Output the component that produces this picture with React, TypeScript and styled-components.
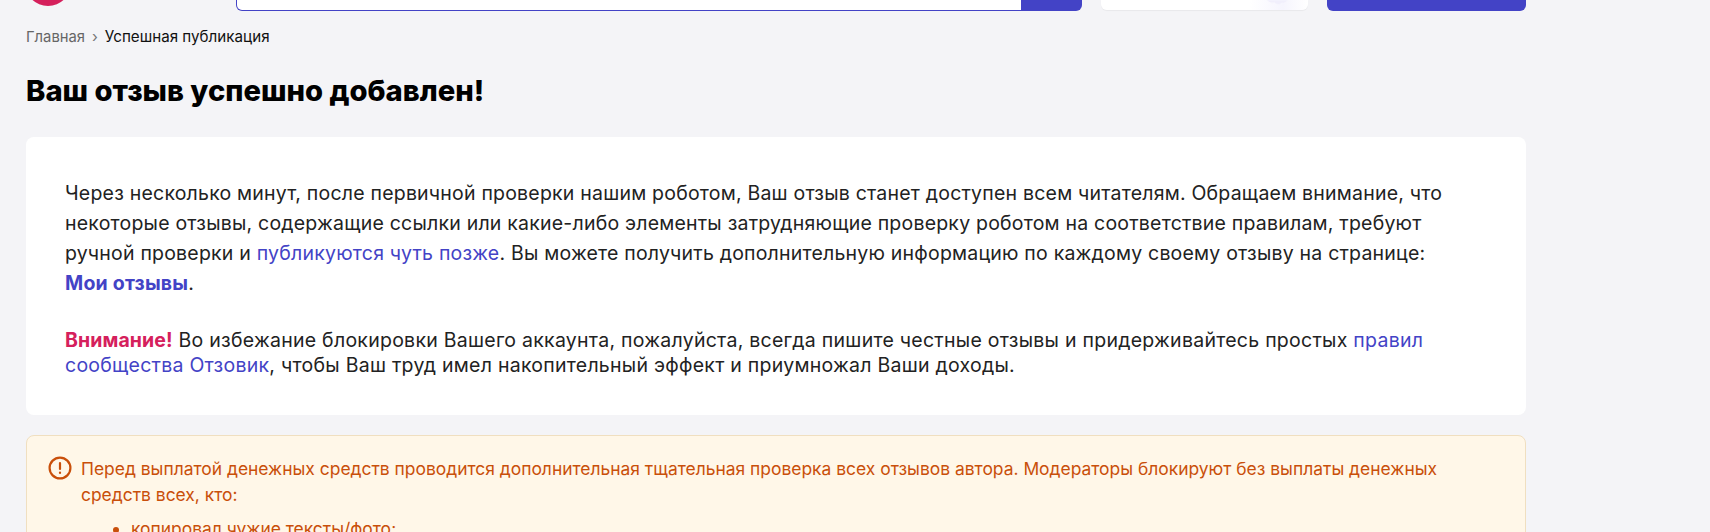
import { createGlobalStyle } from "styled-components";
import styled from "styled-components";

const GlobalStyle = createGlobalStyle`
  html, body {
    margin: 0;
    padding: 0;
    height: 532px;
    overflow: hidden;
    background: #f4f4f7;
  }
  body {
    font-family: Inter, "Noto Sans", sans-serif;
    color: #222;
  }
`;

export default function App() {
  return (
    <>
      <GlobalStyle />
      <Page>
        <Header>
          <LogoArea>
            <LogoMark />
          </LogoArea>
          <Search>
            <SearchField />
            <SearchButton />
          </Search>
          <PromoCard>
            <PromoCloud viewBox="0 0 36 10" fill="none">
              <path d="M0 0c3 4 8 6 12 4 3 4 9 5 12 1 4 1 8-1 10-5z" fill="#f1effc" stroke="#f8f7fe" />
            </PromoCloud>
          </PromoCard>
          <AddButton />
        </Header>

        <Breadcrumbs>
          <Crumb>Главная</Crumb>
          <Separator>›</Separator>
          <CurrentCrumb>Успешная публикация</CurrentCrumb>
        </Breadcrumbs>

        <Title>Ваш отзыв успешно добавлен!</Title>

        <Card>
          <Lead>
            Через несколько минут, после первичной проверки нашим роботом, Ваш отзыв станет доступен всем читателям.
            Обращаем внимание, что некоторые отзывы, содержащие ссылки или какие-либо элементы затрудняющие проверку
            роботом на соответствие правилам, требуют ручной проверки и <TextLink>публикуются чуть позже</TextLink>. Вы
            можете получить дополнительную информацию по каждому своему отзыву на странице:{" "}
            <BoldLink>Мои отзывы</BoldLink>.
          </Lead>
          <Warning>
            <WarningLabel>Внимание!</WarningLabel> Во избежание блокировки Вашего аккаунта, пожалуйста, всегда пишите
            честные отзывы и придерживайтесь простых <TextLink>правил сообщества Отзовик</TextLink>, чтобы Ваш труд имел
            накопительный эффект и приумножал Ваши доходы.
          </Warning>
        </Card>

        <Notice>
          <NoticeIcon viewBox="0 0 24 24" fill="none" stroke="currentColor" strokeWidth="2.2" strokeLinecap="round">
            <circle cx="12" cy="12" r="10.4" />
            <path d="M12 7v6" />
            <path d="M12 16.5v.5" />
          </NoticeIcon>
          <NoticeBody>
            <NoticeText>
              Перед выплатой денежных средств проводится дополнительная тщательная проверка всех отзывов автора.
              Модераторы блокируют без выплаты денежных средств всех, кто:
            </NoticeText>
            <NoticeList>
              <li>копировал чужие тексты/фото;</li>
              <li>писал отзывы на заказ;</li>
            </NoticeList>
          </NoticeBody>
        </Notice>
      </Page>
    </>
  );
}

const Page = styled.div`
  width: 1500px;
  margin-left: 26px;
`;

const Header = styled.header`
  display: flex;
  height: 11px;
`;

const LogoArea = styled.div`
  width: 210px;
  height: 11px;
`;

const LogoMark = styled.div`
  width: 46px;
  height: 46px;
  margin: -40.5px 0 0 -1px;
  border-radius: 50%;
  background: #d5205c;
`;

const Search = styled.div`
  display: flex;
  width: 846px;
`;

const SearchField = styled.div`
  flex: 1;
  background: #fff;
  border: 1px solid #4343c6;
  border-top: none;
  border-radius: 0 0 0 6px;
`;

const SearchButton = styled.div`
  width: 60px;
  background: #4343c6;
  border-radius: 0 0 6px 0;
`;

const PromoCard = styled.div`
  position: relative;
  width: 207px;
  height: 10px;
  margin-left: 19px;
  background: linear-gradient(90deg, #fff 72%, #f6f5fe 88%, #fff 100%);
  border-radius: 0 0 6px 6px;
  box-shadow: 0 1px 1px rgba(0, 0, 0, 0.05);
`;

const PromoCloud = styled.svg`
  position: absolute;
  top: 0;
  right: 12px;
  width: 36px;
  height: 6px;
`;

const AddButton = styled.div`
  width: 199px;
  margin-left: 19px;
  background: #4343c6;
  border-radius: 0 0 6px 6px;
`;

const Breadcrumbs = styled.nav`
  display: flex;
  align-items: center;
  gap: 7px;
  margin-top: 16px;
  height: 20px;
  font-size: 15.2px;
  line-height: 20px;
`;

const Crumb = styled.span`
  color: #666;
  font-size: 14.8px;
`;

const Separator = styled.span`
  color: #777;
`;

const CurrentCrumb = styled.span`
  color: #111;
`;

const Title = styled.h1`
  margin: 26px 0 0;
  height: 36px;
  font-size: 29.2px;
  line-height: 36px;
  font-weight: 800;
  color: #000;
`;

const Card = styled.section`
  box-sizing: border-box;
  height: 278px;
  margin-top: 28px;
  padding: 41px 40px 0 39px;
  background: #fff;
  border-radius: 8px;
  font-size: 19.5px;
  letter-spacing: 0.21px;
`;

const Lead = styled.p`
  margin: 0;
  line-height: 30px;
`;

const Warning = styled.p`
  margin: 30px 0 0;
  line-height: 25px;
  letter-spacing: 0.26px;
`;

const WarningLabel = styled.b`
  color: #d5205c;
  font-weight: 700;
  letter-spacing: 0.1px;
`;

const TextLink = styled.a`
  color: #4343c6;
`;

const BoldLink = styled.a`
  color: #4343c6;
  font-weight: 700;
  white-space: nowrap;
`;

const Notice = styled.section`
  display: flex;
  gap: 9px;
  margin-top: 20px;
  padding: 20px 50px 20px 21px;
  background: #fff7e8;
  border: 1px solid #f0dfc0;
  border-radius: 8px;
  color: #c94f0a;
`;

const NoticeIcon = styled.svg`
  flex: none;
  width: 24px;
  height: 24px;
`;

const NoticeBody = styled.div`
  font-size: 17.43px;
  line-height: 26px;
`;

const NoticeText = styled.p`
  margin: 0;
`;

const NoticeList = styled.ul`
  margin: 8px 0 0;
  padding-left: 50px;
`;
